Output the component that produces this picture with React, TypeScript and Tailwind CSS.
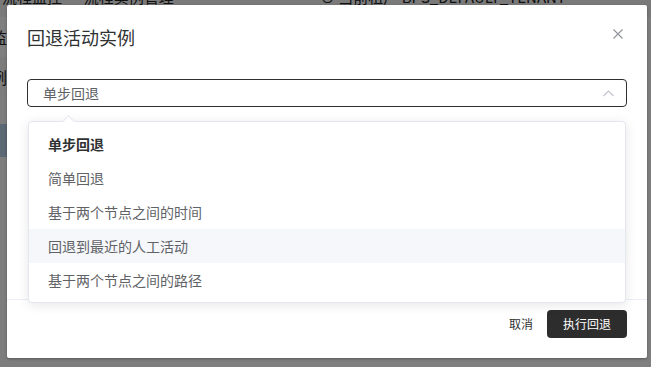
import React from "react";

const font = { fontFamily: '"Noto Sans CJK SC", "Liberation Sans", sans-serif' };

export default function App() {
  const items = [
    "单步回退",
    "简单回退",
    "基于两个节点之间的时间",
    "回退到最近的人工活动",
    "基于两个节点之间的路径",
  ];
  return (
    <div className="relative w-[651px] h-[367px] overflow-hidden bg-white" style={font}>
      {/* background page */}
      <div className="flex flex-col w-full h-full">
        <div className="h-[18px] bg-[#f4f4f4] overflow-hidden">
          <div className="flex h-[18px] -mt-[12px] items-center text-[15px] leading-[18px] text-[#222] whitespace-nowrap">
            <span className="w-[320px] pl-[2px]">流程监控 · 流程实例管理</span>
            <span>⊙ 当前租户 BPS_DEFAULT_TENANT</span>
          </div>
        </div>
        <div className="flex">
          <div className="flex flex-col w-[160px] text-[16px] text-[#222] overflow-hidden">
            <div className="h-[40px] flex items-center -ml-[9px]">监</div>
            <div className="h-[40px] flex items-center -ml-[9px] bg-[#f8f8f8]">例</div>
            <div className="h-[27px] bg-[#fafafa]"></div>
            <div className="h-[33px] bg-[#bad0ea]"></div>
            <div className="h-[210px] bg-[#fafafa]"></div>
          </div>
          <div className="flex-1"></div>
        </div>
      </div>

      {/* overlay */}
      <div className="absolute inset-0 bg-black/50"></div>

      {/* modal */}
      <div className="absolute left-[7px] top-[5px] w-[640px] h-[353px] bg-white rounded-[2px] shadow-[0_1px_3px_rgba(0,0,0,0.3)] flex flex-col">
        <div className="pt-[20px] px-[20px] h-[49px]">
          <div className="text-[18px] leading-[24px] text-[#303133]">回退活动实例</div>
        </div>
        <button className="absolute right-[24px] top-[24px] w-[10px] h-[10px]">
          <svg width="10" height="10" viewBox="0 0 10 10" fill="none" stroke="#909399" strokeWidth="1.1">
            <path d="M0.5 0.5 L9.5 9.5 M9.5 0.5 L0.5 9.5" />
          </svg>
        </button>

        <div className="relative flex-1 pt-[25px] px-[20px]">
          <div className="relative h-[28px] w-[600px] border border-[#2f2f2f] rounded-[4px] flex items-center pl-[15px] text-[14px] text-[#606266]">
            单步回退
            <svg className="absolute right-[12px] top-[10px]" width="11" height="7" viewBox="0 0 11 7" fill="none" stroke="#c0c4cc" strokeWidth="1.1">
              <path d="M0.5 6 L5.5 1 L10.5 6" />
            </svg>
          </div>

          {/* dropdown */}
          <div className="absolute left-[21px] top-[67px] w-[598px] h-[182px] bg-white border border-[#e4e7ed] rounded-[4px] shadow-[0_2px_12px_rgba(0,0,0,0.1)] py-[5px] z-10">
            <div className="absolute -top-[5px] left-[35px] w-[9px] h-[9px] bg-white border-t border-l border-[#e4e7ed] rotate-45"></div>
            {items.map((t, i) => (
              <div
                key={t}
                className={
                  "h-[34px] flex items-center pl-[19px] text-[14px] " +
                  (i === 0 ? "font-bold text-[#303133] " : "text-[#606266] ") +
                  (i === 3 ? "bg-[#f5f7fa]" : "")
                }
              >
                {t}
              </div>
            ))}
          </div>
        </div>

        <div className="border-t border-[#ebeef5] pt-[10px] pb-[20px] pr-[20px] flex items-center justify-end">
          <span className="text-[12px] text-[#303133] mr-[14px]">取消</span>
          <button className="h-[28px] w-[80px] rounded-[4px] bg-[#2d2d2d] text-white text-[12px]">执行回退</button>
        </div>
      </div>
    </div>
  );
}
